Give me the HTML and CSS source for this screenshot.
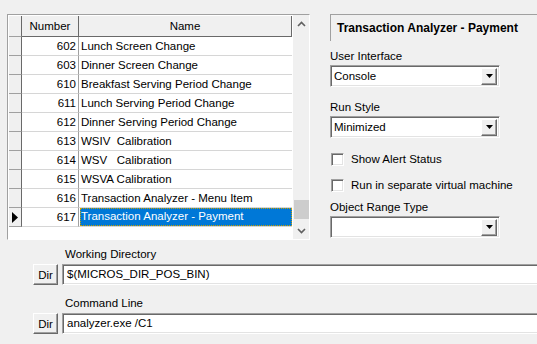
FILE: index.html
```html
<!DOCTYPE html>
<html>
<head>
<meta charset="utf-8">
<link rel="stylesheet" href="styles.css">
</head>
<body>
<div class="page">
  <div class="top">
    <div class="grid">
      <div class="table">
        <div class="row head">
          <div class="ind"></div>
          <div class="num">Number</div>
          <div class="name">Name</div>
        </div>
        <div class="row"><div class="ind"></div><div class="num">602</div><div class="name">Lunch Screen Change</div></div>
        <div class="row"><div class="ind"></div><div class="num">603</div><div class="name">Dinner Screen Change</div></div>
        <div class="row"><div class="ind"></div><div class="num">610</div><div class="name">Breakfast Serving Period Change</div></div>
        <div class="row"><div class="ind"></div><div class="num">611</div><div class="name">Lunch Serving Period Change</div></div>
        <div class="row"><div class="ind"></div><div class="num">612</div><div class="name">Dinner Serving Period Change</div></div>
        <div class="row"><div class="ind"></div><div class="num">613</div><div class="name">WSIV&nbsp; Calibration</div></div>
        <div class="row"><div class="ind"></div><div class="num">614</div><div class="name">WSV&nbsp;&nbsp; Calibration</div></div>
        <div class="row"><div class="ind"></div><div class="num">615</div><div class="name">WSVA Calibration</div></div>
        <div class="row"><div class="ind"></div><div class="num">616</div><div class="name">Transaction Analyzer - Menu Item</div></div>
        <div class="row sel"><div class="ind"><svg width="8" height="11" viewBox="0 0 8 11"><path d="M1 0 L7 5.5 L1 11 Z" fill="#000"/></svg></div><div class="num">617</div><div class="name"><span class="focus">Transaction Analyzer - Payment</span></div></div>
      </div>
      <div class="vscroll">
        <div class="sbtn"><svg width="9" height="6" viewBox="0 0 9 6"><path d="M1 5 L4.5 1.5 L8 5" fill="none" stroke="#606060" stroke-width="1.6"/></svg></div>
        <div class="track"><div class="thumb"></div></div>
        <div class="sbtn"><svg width="9" height="6" viewBox="0 0 9 6"><path d="M1 1 L4.5 4.5 L8 1" fill="none" stroke="#606060" stroke-width="1.6"/></svg></div>
      </div>
    </div>
    <div class="panel">
      <div class="title">Transaction Analyzer - Payment</div>
      <div class="field">
        <div class="lbl">User Interface</div>
        <div class="combo"><span class="val">Console</span><span class="drop"><svg width="7" height="4" viewBox="0 0 7 4"><path d="M0 0 H7 L3.5 4 Z" fill="#000"/></svg></span></div>
      </div>
      <div class="field">
        <div class="lbl">Run Style</div>
        <div class="combo"><span class="val">Minimized</span><span class="drop"><svg width="7" height="4" viewBox="0 0 7 4"><path d="M0 0 H7 L3.5 4 Z" fill="#000"/></svg></span></div>
      </div>
      <div class="check first"><span class="box"></span><span>Show Alert Status</span></div>
      <div class="check"><span class="box"></span><span>Run in separate virtual machine</span></div>
      <div class="field obj">
        <div class="lbl">Object Range Type</div>
        <div class="combo"><span class="val"></span><span class="drop"><svg width="7" height="4" viewBox="0 0 7 4"><path d="M0 0 H7 L3.5 4 Z" fill="#000"/></svg></span></div>
      </div>
    </div>
  </div>
  <div class="bottom">
    <div class="lbl2">Working Directory</div>
    <div class="line"><button class="dir">Dir</button><div class="text">$(MICROS_DIR_POS_BIN)</div></div>
    <div class="lbl2 second">Command Line</div>
    <div class="line"><button class="dir">Dir</button><div class="text">analyzer.exe /C1</div></div>
  </div>
</div>
</body>
</html>
```

FILE: styles.css
```css
* { box-sizing: border-box; }
html, body { margin: 0; padding: 0; }
body {
  background: #f0f0f0;
  font-family: "Liberation Sans", Arial, sans-serif;
  font-size: 11.5px;
  color: #000;
  width: 537px;
  height: 344px;
  overflow: hidden;
}
.page { padding-top: 14px; }
.top { display: flex; align-items: flex-start; }

.grid {
  margin-left: 7px;
  width: 303px;
  height: 226px;
  display: flex;
  border-left: 1px solid #a0a0a0;
  border-top: 1px solid #a0a0a0;
  border-bottom: 1px solid #fff;
  border-right: 1px solid #fff;
  box-shadow: inset 1px 1px 0 #696969;
  background: #fff;
}
.table {
  width: 284px;
  background: #fff;
  padding-left: 1px;
  padding-top: 1px;
}
.row { display: flex; height: 19px; }
.row > div { border-bottom: 1px solid #d6d6d6; line-height: 18px; white-space: nowrap; overflow: hidden; }
.ind {
  width: 13px;
  background: #f0f0f0;
  border-right: 1px solid #696969;
  border-bottom: 1px solid #a0a0a0 !important;
  display: flex; align-items: center; justify-content: center;
}
.num {
  width: 57px;
  text-align: right;
  padding-right: 2px;
  border-right: 1px solid #a0a0a0;
}
.name { flex: 1; padding-left: 2px; }
.row.head { height: 21px; }
.row.head > div {
  background: #f0f0f0;
  line-height: 20px;
  border-bottom: 1px solid #696969;
}
.row.head .num {
  text-align: center;
  border-right: 1px solid #696969;
  padding-right: 0;
}
.row.head .name { text-align: center; border-right: 1px solid #696969; padding-left: 0; }
.row.sel .name { padding-left: 1px; padding-top: 0; }
.focus {
  display: block;
  height: 18px;
  background: #0078d7;
  color: #fff;
  padding-left: 1px;
  outline: 1px dotted #c9a000;
  outline-offset: -1px;
  line-height: 17px;
}
.row.sel .ind { justify-content: flex-start; padding-left: 2px; }

.vscroll {
  width: 17px;
  background: #f0f0f0;
  display: flex;
  flex-direction: column;
  border-left: 1px solid #fff;
}
.sbtn { height: 17px; display: flex; align-items: center; justify-content: center; }
.track { flex: 1; position: relative; }
.thumb { position: absolute; left: 1px; right: 0; bottom: 3px; height: 19px; background: #cdcdcd; }

.panel { margin-left: 20px; flex: 1; }
.title {
  height: 27px;
  font-weight: bold;
  font-size: 12px;
  padding-left: 6px;
  line-height: 26px;
  border-left: 1px solid #a0a0a0;
  border-top: 1px solid #a0a0a0;
}
.field { margin-top: 8px; }
.field .lbl { height: 15px; line-height: 15px; margin-bottom: 1px; }
.field + .field { margin-top: 13px; }
.combo {
  width: 170px;
  height: 22px;
  background: #fff;
  border-left: 1px solid #a0a0a0;
  border-top: 1px solid #a0a0a0;
  border-right: 1px solid #fff;
  border-bottom: 1px solid #fff;
  box-shadow: inset 1px 1px 0 #696969, inset -1px -1px 0 #e3e3e3;
  display: flex;
  align-items: center;
}
.val { flex: 1; padding-left: 3px; }
.drop {
  width: 16px;
  height: 17px;
  margin-right: 2px;
  background: #f0f0f0;
  border-left: 1px solid #fff;
  border-top: 1px solid #fff;
  border-right: 1px solid #696969;
  border-bottom: 1px solid #696969;
  box-shadow: inset -1px -1px 0 #a0a0a0;
  display: flex; align-items: center; justify-content: center;
}
.check { display: flex; align-items: center; height: 16px; margin-top: 10px; }
.check.first { margin-top: 13px; }
.box {
  width: 13px; height: 13px;
  margin-left: 1px; margin-right: 7px;
  background: #fff;
  border-left: 1px solid #a0a0a0;
  border-top: 1px solid #a0a0a0;
  border-right: 1px solid #fff;
  border-bottom: 1px solid #fff;
  box-shadow: inset 1px 1px 0 #696969, inset -1px -1px 0 #e3e3e3;
}
.field.obj { margin-top: 7px; }

.bottom { margin-top: 7px; padding-left: 33px; }
.lbl2 { padding-left: 32px; height: 15px; line-height: 15px; margin-bottom: 2px; }
.lbl2.second { margin-top: 11px; }
.line { display: flex; align-items: center; height: 21px; }
.dir {
  width: 25px;
  height: 21px;
  padding: 0;
  font-family: inherit;
  font-size: 11.5px;
  background: #f0f0f0;
  border-left: 1px solid #fff;
  border-top: 1px solid #fff;
  border-right: 1px solid #696969;
  border-bottom: 1px solid #696969;
  box-shadow: inset -1px -1px 0 #a0a0a0;
  margin-right: 4px;
  color: #000;
}
.text {
  flex: 1;
  height: 21px;
  background: #fff;
  border-top: 1px solid #a0a0a0;
  border-left: 1px solid #a0a0a0;
  border-bottom: 1px solid #fff;
  box-shadow: inset 1px 1px 0 #696969, inset 0 -1px 0 #e3e3e3;
  padding-left: 4px;
  line-height: 19px;
}
```
